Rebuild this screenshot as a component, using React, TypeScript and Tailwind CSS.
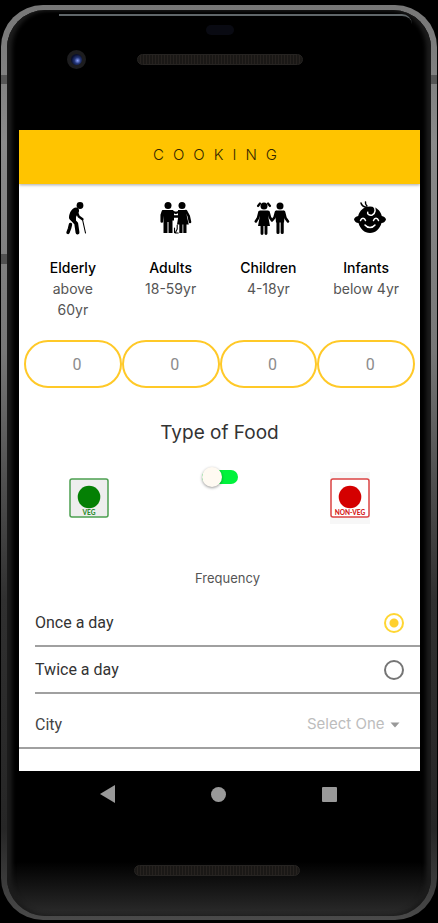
import React, { useState } from "react";

const SANS = "font-['Inter','Liberation_Sans',sans-serif]";

function ElderlyIcon() {
  return (
    <svg viewBox="0 0 34 34" className="h-[34px] w-[34px]" fill="none" stroke="#000" strokeLinecap="round" strokeLinejoin="round" aria-hidden="true">
      <circle cx="20" cy="4.500" r="3.400" fill="#000" stroke="none" />
      <path d="M16 6.500c-4 .3-6.500 5-7 9.500-.2 1.500.6 2.500 1.800 3.300l5.200 3.200v-6.500l3-5.500c.5-2.300-1-4.200-3-4z" fill="#000" stroke="none" />
      <path d="M16.500 10l2.200 5.500 3.800 2.700" strokeWidth="2.300" />
      <path d="M12 18l4.200 4.500 1.300 9" strokeWidth="3.900" />
      <path d="M10.500 23.500l-1 4-1.500 4" strokeWidth="3.400" />
      <path d="M22.500 18.500l3 13.500" strokeWidth="1.100" />
    </svg>
  );
}

function AdultsIcon() {
  return (
    <svg viewBox="0 0 34 34" className="h-[34px] w-[34px]" fill="none" stroke="#000" strokeLinecap="round" strokeLinejoin="round" aria-hidden="true">
      <circle cx="10" cy="4.500" r="3.500" fill="#000" stroke="none" />
      <circle cx="24" cy="4.500" r="3.500" fill="#000" stroke="none" />
      <path d="M5 9h10l1 1.500v9h-1.500v12.500h-4V21h-1v11h-4V19.500L4.500 10z" fill="#000" stroke="none" />
      <path d="M5 10.500L3.800 14v6.500" strokeWidth="2.700" />
      <path d="M15 11l3 .8M19 11.500l3-.8M15 15.500h6" strokeWidth="2.300" />
      <path d="M20 9h8l1 7 1.800 7.500H28.500V32h-3.200v-8.500h-.8V32h-3.200v-8.500H19l1-6z" fill="#000" stroke="none" />
      <path d="M28 10l2.700 5 1.300 6" strokeWidth="2.600" />
      <path d="M19.200 24v4l-2 4h3M16.500 27v4.500" strokeWidth="1.100" />
    </svg>
  );
}

function ChildrenIcon() {
  return (
    <svg viewBox="0 0 36 34" className="h-[34px] w-9" fill="none" stroke="#000" strokeLinecap="round" strokeLinejoin="round" aria-hidden="true">
      <circle cx="10" cy="5" r="3.500" fill="#000" stroke="none" />
      <path d="M6 2.500L4 5M14 2.500l2 2.500" strokeWidth="2.200" />
      <circle cx="26" cy="5" r="3.500" fill="#000" stroke="none" />
      <path d="M6 9.500h8l1 1.500-.5 6 1.500 8H4l1.500-8-.5-6z" fill="#000" stroke="none" />
      <path d="M5.500 11l-1.500 6-2.200 3.500M14.500 11l1.500 5.500 2 3 2.500-3 1.500-5.500M30 11l1.500 6 2.500 3.500" strokeWidth="2.600" />
      <path d="M8 23v9.500M12 23v9.500" strokeWidth="2.900" />
      <path d="M22 9.500h8l1 1.500-1 10.500h-8L21 11z" fill="#000" stroke="none" />
      <path d="M24 19v12.500M28.200 19v12.500" strokeWidth="3.100" />
    </svg>
  );
}

function InfantIcon() {
  return (
    <svg viewBox="0 0 34 34" className="h-[34px] w-[34px]" fill="none" stroke="#000" strokeLinecap="round" strokeLinejoin="round" aria-hidden="true">
      <path d="M17 5.500c6 0 10.500 4 11.800 9.500 2.200.3 3.900 1.900 4.200 3.500-.5 1.900-2.200 3.300-4.500 3.500C26.800 28 22.500 32 17 32S7.200 28 5.500 22C3.200 21.800 1.500 20.400 1 18.500c.3-1.600 2-3.200 4.200-3.500C6.500 9.500 11 5.500 17 5.500z" fill="#000" stroke="none" />
      <path d="M13.500 6.500C10.500 5.800 8.500 4 8 2M14 5c-1-1-1.800-2.500-1.500-4" strokeWidth="1.500" />
      <path d="M20.500 5.500c2.500 2 2.200 7-1.300 8.500-2.500 1-5.200-.8-4.500-2.800" stroke="#fff" strokeWidth="1.500" />
      <path d="M7.500 19.500c1-3 4-3 5 0M20.500 19.500c1-3 4-3 5 0M12 24c2.500 3.200 7.500 3.200 10 0" stroke="#fff" strokeWidth="1.500" />
    </svg>
  );
}

const groups = [
  { name: "Elderly", ages: ["above", "60yr"], Icon: ElderlyIcon },
  { name: "Adults", ages: ["18-59yr"], Icon: AdultsIcon },
  { name: "Children", ages: ["4-18yr"], Icon: ChildrenIcon },
  { name: "Infants", ages: ["below 4yr"], Icon: InfantIcon },
];

function Speaker() {
  return <div className="h-[11px] w-[166px] rounded-full border border-[#262422] bg-[repeating-linear-gradient(90deg,#1a1816_0px,#1a1816_2px,#26221f_2px,#26221f_3px)]" />;
}

function FoodMark({ veg }: { veg: boolean }) {
  return (
    <svg viewBox="0 0 40 52" className="h-[52px] w-10" role="img" aria-label={veg ? "Vegetarian" : "Non-vegetarian"}>
      {!veg && <rect width="40" height="52" fill="#f7f7f7" />}
      <rect x="1" y="7" width="38" height="38" rx="2" fill={veg ? "#eeeeee" : "#ffffff"} stroke={veg ? "#4ca050" : "#dc4444"} strokeWidth="1.500" />
      <circle cx="20" cy="25" r="11.300" fill={veg ? "#048004" : "#d40000"} />
      <text x="20" y="42.500" textAnchor="middle" fontFamily="Lato, sans-serif" fontWeight="900" fontSize="6.500" fill={veg ? "#2c8c30" : "#d42020"}>
        {veg ? "VEG" : "NON-VEG"}
      </text>
    </svg>
  );
}

function FrequencyRow({ label, checked, onSelect }: { label: string; checked: boolean; onSelect: () => void }) {
  return (
    <label className="ml-4 flex h-[47px] items-center justify-between border-b-2 border-[#a0a0a0] pr-4 font-['Roboto',sans-serif] text-base text-[#333]">
      {label}
      <input
        type="radio"
        name="frequency"
        checked={checked}
        onChange={onSelect}
        className="h-5 w-5 appearance-none rounded-full border-2 border-[#757575] checked:border-[#ffd633] checked:bg-[radial-gradient(circle,#ffd02e_4px,transparent_5px)]"
      />
    </label>
  );
}

function CookingScreen() {
  const [frequency, setFrequency] = useState("Once a day");
  return (
    <main className={`h-[641px] overflow-hidden bg-white ${SANS}`}>
      <header className="flex h-[54px] items-center justify-center bg-[#ffc400] pb-1 shadow-[0_1px_3px_rgba(0,0,0,0.35)]">
        <h1 className="text-[15px] font-light tracking-[9px] text-[#332700]">COOKING</h1>
      </header>

      <section className="grid grid-cols-4 px-[5px] pt-[17px]">
        {groups.map(({ name, ages, Icon }) => (
          <div key={name} className="flex flex-col items-center">
            <div className="pl-2">
              <Icon />
            </div>
            <label htmlFor={name} className="flex h-[105px] flex-col items-center pt-[22px] text-sm leading-[21px] text-[#555]">
              <span className="font-medium text-black">{name}</span>
              {ages.map((line) => (
                <span key={line}>{line}</span>
              ))}
            </label>
            <input
              id={name}
              type="text"
              inputMode="numeric"
              placeholder="0"
              className="h-12 w-full rounded-full border-2 border-[#ffc928] pl-2 text-center font-['Roboto',sans-serif] text-base text-[#555] outline-none placeholder:text-[#8c8c8c]"
            />
          </div>
        ))}
      </section>

      <section>
        <h2 className="pt-[33px] text-center text-[19px] leading-6 text-[#333]">Type of Food</h2>
        <div className="flex h-20 justify-between pl-[50px] pr-[50px]">
          <div className="pt-[27px]">
            <FoodMark veg />
          </div>
          <label className="mt-[22px] flex h-5 w-9 cursor-pointer items-center">
            <input type="checkbox" role="switch" aria-label="Vegetarian or non-vegetarian" className="peer sr-only" />
            <span className="flex h-[14px] w-9 items-center rounded-full bg-[#00f23c]">
              <span className="h-5 w-5 rounded-full bg-[#fffaf2] shadow-[0_1px_3px_rgba(0,0,0,0.4)]" />
            </span>
          </label>
          <div className="pt-[27px]">
            <FoodMark veg={false} />
          </div>
        </div>
      </section>

      <section>
        <h3 className="pl-4 pt-[43px] text-center text-[13px] leading-5 text-[#555]">Frequency</h3>
        <div className="pt-3">
          {["Once a day", "Twice a day"].map((label) => (
            <FrequencyRow key={label} label={label} checked={frequency === label} onSelect={() => setFrequency(label)} />
          ))}
        </div>
      </section>

      <div className="flex h-[55px] items-center justify-between border-b-2 border-[#a0a0a0] pl-4 pr-5 pt-2">
        <label htmlFor="city" className="font-['Roboto',sans-serif] text-base text-[#444]">City</label>
        <div className="flex items-center gap-[5px]">
          <select id="city" className="appearance-none bg-transparent text-[15px] text-[#bdbdbd] outline-none">
            <option>Select One</option>
          </select>
          <svg viewBox="0 0 10 6" className="h-[6px] w-[10px]" aria-hidden="true">
            <path d="M.5.500h9L5 5.500z" fill="#999" />
          </svg>
        </div>
      </div>
    </main>
  );
}

export default function App() {
  return (
    <div className="bg-black px-px pb-[3px] pt-[5px]">
      <div className="relative rounded-[42px] bg-[linear-gradient(180deg,#777_0%,#8a8a8a_15%,#777_38%,#505050_52%,#303030_65%,#262626_90%,#4a4a4a_100%)] px-[6px] pb-1 pt-[5px]">
        <div className="absolute inset-x-0 top-[70px] h-[9px] bg-[#555]" />
        <div className="absolute left-0 top-[249px] h-[10px] w-2 bg-[#505050]" />
        <div className="relative rounded-[38px] bg-[linear-gradient(180deg,#000_94%,#2c2c2c_100%)] shadow-[inset_5px_0_4px_#1c1c1c,inset_-5px_0_4px_#1c1c1c]">
          <div className="flex h-[120px] flex-col pl-3 pr-[11px]">
            <div className="ml-10 mr-2 mt-1 h-[10px] rounded-tr-[20px] border-t-2 border-[#5f6669]" />
            <div className="mx-auto mt-px h-[10px] w-7 rounded-full bg-[#090a12]" />
            <div className="grid grid-cols-[1fr_auto_1fr] items-center pt-[15px]">
              <div className="ml-12 h-[19px] w-[19px] rounded-full border-4 border-[#1d1d1f] bg-[radial-gradient(circle_at_60%_60%,#8ea4ff_0px,#253779_3px,#0a1030_6px)]" />
              <Speaker />
            </div>
          </div>
          <div className="pl-3 pr-[11px]">
            <CookingScreen />
          </div>
          <nav className="flex h-[46px] items-center justify-between pl-[93px] pr-[94px]">
            <button aria-label="Back">
              <svg viewBox="0 0 15 18" className="h-[18px] w-[15px]">
                <path d="M15 0v18L0 9z" fill="#999" />
              </svg>
            </button>
            <button aria-label="Home" className="h-[15px] w-[15px] rounded-full bg-[#999]" />
            <button aria-label="Overview" className="h-[15px] w-[15px] rounded-[1px] bg-[#999]" />
          </nav>
          <div className="flex h-[99px] justify-center pr-1 pt-12">
            <Speaker />
          </div>
        </div>
      </div>
    </div>
  );
}
